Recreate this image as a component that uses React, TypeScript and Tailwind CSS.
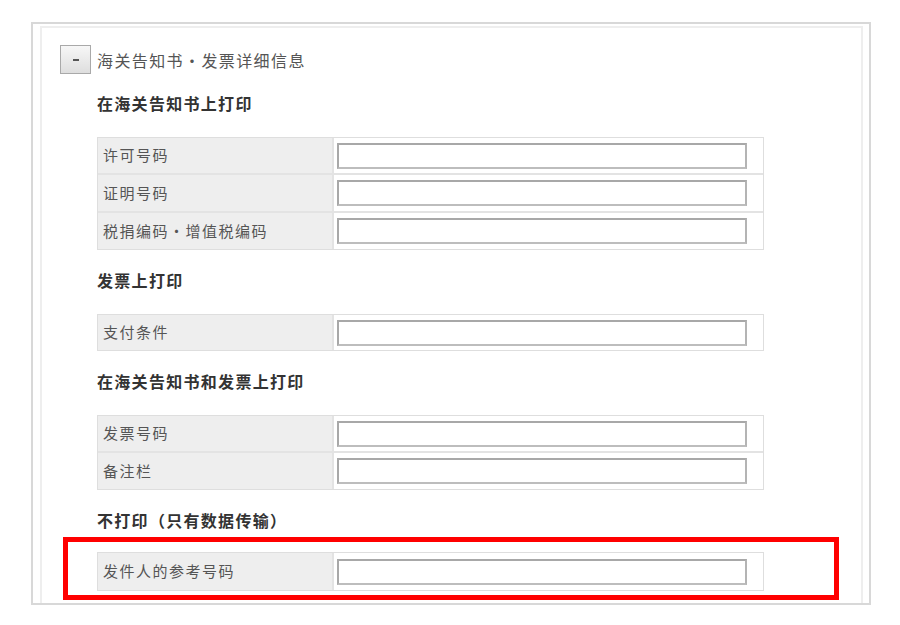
// Customs notice / invoice detail form, with the last section highlighted.

type Section = {
  title: string;
  fields: string[];
  highlight?: boolean;
};

const sections: Section[] = [
  {
    title: "在海关告知书上打印",
    fields: ["许可号码", "证明号码", "税捐编码・增值税编码"],
  },
  { title: "发票上打印", fields: ["支付条件"] },
  { title: "在海关告知书和发票上打印", fields: ["发票号码", "备注栏"] },
  { title: "不打印（只有数据传输）", fields: ["发件人的参考号码"], highlight: true },
];

const font = { fontFamily: '"Noto Sans CJK SC", "Noto Sans", sans-serif' };

function FieldTable({ fields, tall }: { fields: string[]; tall?: boolean }) {
  return (
    <div className="w-[667px] border border-[#dedede]">
      {fields.map((label, i) => (
        <div
          key={label}
          className={`flex ${
            i > 0 ? "h-[38px] border-t-2 border-[#e3e3e3]" : tall ? "h-[37px]" : "h-[35px]"
          }`}
        >
          <div className="flex w-[236px] shrink-0 items-center border-r-2 border-[#e3e3e3] bg-[#eeeeee] pl-[5px] text-[15px] tracking-[1.5px] text-[#555]">
            {label}
          </div>
          <div className="flex flex-1 items-center pl-[3px]">
            <input
              type="text"
              className="h-[26px] w-[410px] border-2 border-[#a8a8a8] border-b-[#bdbdbd] border-r-[#b4b4b4] bg-white outline-none"
            />
          </div>
        </div>
      ))}
    </div>
  );
}

export default function App() {
  return (
    <div className="h-[625px] w-[900px] bg-white pt-[22px] pl-[31px]" style={font}>
      <div className="flex h-[583px] w-[840px] flex-col overflow-hidden border-2 border-[#d8d8d8] pt-[2px] pr-[6px] pl-[7px]">
        <div className="flex-1 border-2 border-b-0 border-[#eeeeee] pt-[17px]">
          <div className="flex items-center pl-[18px]">
            <button className="flex h-[29px] w-[31px] items-center justify-center border border-[#a9a9a9] bg-gradient-to-b from-[#f7f7f7] to-[#dedede]">
              <span className="block h-[2px] w-[6px] bg-[#555]" />
            </button>
            <span className="ml-[6px] text-[16px] tracking-[1.4px] text-[#555]">
              海关告知书・发票详细信息
            </span>
          </div>

          <div className="pl-[55px]">
            {sections.map((s, i) => (
              <div key={s.title}>
                <h3
                  className={`h-[20px] text-[16px] leading-[20px] font-bold tracking-[1.3px] text-[#333] ${
                    i === 0 ? "mt-[19px]" : "mt-[20px]"
                  } ${s.highlight ? "mb-[7px]" : "mb-[24px]"}`}
                >
                  {s.title}
                </h3>
                {s.highlight ? (
                  <div className="ml-[-34px] w-[776px] border-[5px] border-[#ff0000] pt-[10px] pb-[4px] pl-[29px]">
                    <FieldTable fields={s.fields} tall />
                  </div>
                ) : (
                  <FieldTable fields={s.fields} />
                )}
              </div>
            ))}
          </div>
        </div>
      </div>
    </div>
  );
}
